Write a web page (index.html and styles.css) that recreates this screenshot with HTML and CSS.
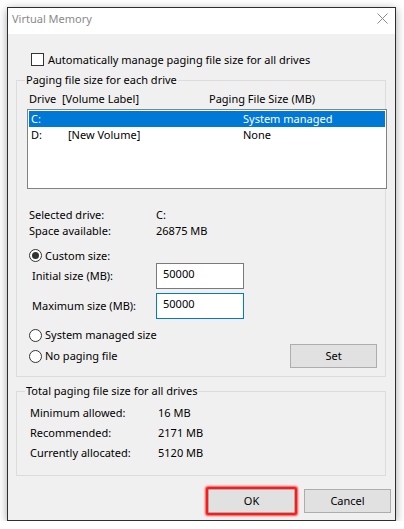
FILE: index.html
```html
<!DOCTYPE html>
<html>
<head>
<meta charset="utf-8">
<link rel="stylesheet" href="styles.css">
</head>
<body>
<div class="window">
  <div class="titlebar">
    <span class="title">Virtual Memory</span>
    <svg class="close" width="11" height="11" viewBox="0 0 11 11"><path d="M0.5 0.5 L10.5 10.5 M10.5 0.5 L0.5 10.5" stroke="#8a8a8a" stroke-width="1" fill="none"/></svg>
  </div>
  <div class="content">
    <div class="check-row">
      <span class="checkbox"></span>
      <span>Automatically manage paging file size for all drives</span>
    </div>

    <div class="group group-drives">
      <span class="legend">Paging file size for each drive</span>
      <div class="list-head">
        <span>Drive</span><span>[Volume Label]</span><span>Paging File Size (MB)</span>
      </div>
      <div class="listbox">
        <div class="list-row selected"><span>C:</span><span></span><span>System managed</span></div>
        <div class="list-row"><span>D:</span><span>[New Volume]</span><span>None</span></div>
      </div>
      <div class="info">
        <span>Selected drive:</span><span>C:</span>
        <span>Space available:</span><span>26875 MB</span>
      </div>
      <div class="radio-row radio-custom">
        <span class="radio checked"></span><span>Custom size:</span>
      </div>
      <div class="size-row">
        <span class="size-label">Initial size (MB):</span>
        <span class="edit">50000</span>
      </div>
      <div class="size-row size-max">
        <span class="size-label">Maximum size (MB):</span>
        <span class="edit focused">50000</span>
      </div>
      <div class="radio-row radio-system">
        <span class="radio"></span><span>System managed size</span>
      </div>
      <div class="last-row">
        <div class="radio-row">
          <span class="radio"></span><span>No paging file</span>
        </div>
        <span class="button set">Set</span>
      </div>
    </div>

    <div class="group group-total">
      <span class="legend">Total paging file size for all drives</span>
      <div class="totals">
        <span>Minimum allowed:</span><span>16 MB</span>
        <span>Recommended:</span><span>2171 MB</span>
        <span>Currently allocated:</span><span>5120 MB</span>
      </div>
    </div>

    <div class="buttons">
      <span class="button ok">OK</span>
      <span class="button">Cancel</span>
    </div>
  </div>
</div>
</body>
</html>
```

FILE: styles.css
```css
html, body {
  margin: 0;
  padding: 0;
  background: #ffffff;
}
body {
  font-family: "Noto Sans", "Open Sans", sans-serif;
  font-size: 11px;
  color: #000;
}
.window {
  margin: 7px 0 0 7px;
  width: 389px;
  height: 514px;
  box-sizing: border-box;
  border: 1px solid #2e2e2e;
  background: #f0f0f0;
  box-shadow: 0 2px 9px rgba(0, 0, 0, 0.35);
  display: flex;
  flex-direction: column;
}
.titlebar {
  height: 26px;
  background: #ffffff;
  display: flex;
  align-items: flex-start;
  justify-content: space-between;
  padding: 3px 0 0 4px;
  box-sizing: border-box;
}
.title {
  line-height: 16px;
  color: #8a8a8a;
}
.close {
  margin: 2px 7px 0 0;
}
.content {
  flex: 1;
  padding: 0 9px 0 8px;
}
.check-row {
  margin-top: 19px;
  height: 13px;
  display: flex;
  align-items: center;
  gap: 4px;
  padding-left: 15px;
  line-height: 16px;
}
.checkbox {
  width: 13px;
  height: 13px;
  box-sizing: border-box;
  border: 1px solid #333;
  background: #fff;
  flex: none;
}
.group {
  position: relative;
  border: 1px solid #dcdcdc;
}
.group-drives {
  margin-top: 14px;
  padding-bottom: 8px;
}
.legend {
  position: absolute;
  left: 8px;
  top: -9px;
  padding: 0 1px;
  line-height: 16px;
  background: #f0f0f0;
}
.list-head {
  margin-top: 10px;
  height: 15px;
  line-height: 15px;
  padding-left: 12px;
  display: grid;
  grid-template-columns: 33px 147px auto;
}
.listbox {
  margin: 3px 0 0 10px;
  width: 360px;
  height: 80px;
  box-sizing: border-box;
  border: 1px solid #828282;
  background: #fff;
  padding: 1px;
}
.list-row {
  height: 16px;
  line-height: 16px;
  padding-left: 2px;
  display: grid;
  grid-template-columns: 37px 175px auto;
}
.list-row.selected {
  background: #0078d7;
  color: #fff;
}
.info {
  margin-top: 18px;
  padding-left: 12px;
  display: grid;
  grid-template-columns: 127px auto;
  line-height: 16px;
}
.radio-row {
  display: flex;
  align-items: center;
  gap: 3px;
  padding-left: 12px;
  height: 16px;
  line-height: 16px;
}
.radio-custom {
  margin-top: 9px;
  height: 15px;
}
.radio-system {
  margin-top: 8px;
}
.radio {
  width: 13px;
  height: 13px;
  box-sizing: border-box;
  border: 1px solid #333;
  border-radius: 50%;
  background: #fff;
  flex: none;
  display: flex;
  align-items: center;
  justify-content: center;
}
.radio.checked::after {
  content: "";
  width: 7px;
  height: 7px;
  border-radius: 50%;
  background: #333;
}
.size-row {
  height: 26px;
  display: flex;
  align-items: center;
  padding-left: 15px;
}
.size-max {
  margin-top: 4px;
}
.size-label {
  width: 124px;
  line-height: 16px;
}
.edit {
  width: 88px;
  height: 26px;
  box-sizing: border-box;
  border: 1px solid #7a7a7a;
  background: #fff;
  padding: 2px 6px 0;
  line-height: 16px;
  align-self: flex-start;
}
.edit.focused {
  border-color: #0078d7;
}
.last-row {
  margin-top: 1px;
  height: 24px;
  display: flex;
  align-items: center;
  justify-content: space-between;
}
.button {
  width: 87px;
  height: 24px;
  box-sizing: border-box;
  border: 1px solid #adadad;
  background: #e1e1e1;
  display: flex;
  align-items: center;
  justify-content: center;
  line-height: 16px;
}
.set {
  margin-right: 8px;
}
.group-total {
  margin-top: 14px;
  padding: 11px 0 12px 13px;
}
.totals {
  display: grid;
  grid-template-columns: 128px auto;
  line-height: 20px;
}
.buttons {
  margin: 13px -5px 0 0;
  display: flex;
  justify-content: flex-end;
  gap: 9px;
}
.ok {
  border-radius: 1px;
  box-shadow: 0 0 0 2px #ff1a1a, 0 0 2px 3px rgba(255, 0, 0, 0.7);
}
```
